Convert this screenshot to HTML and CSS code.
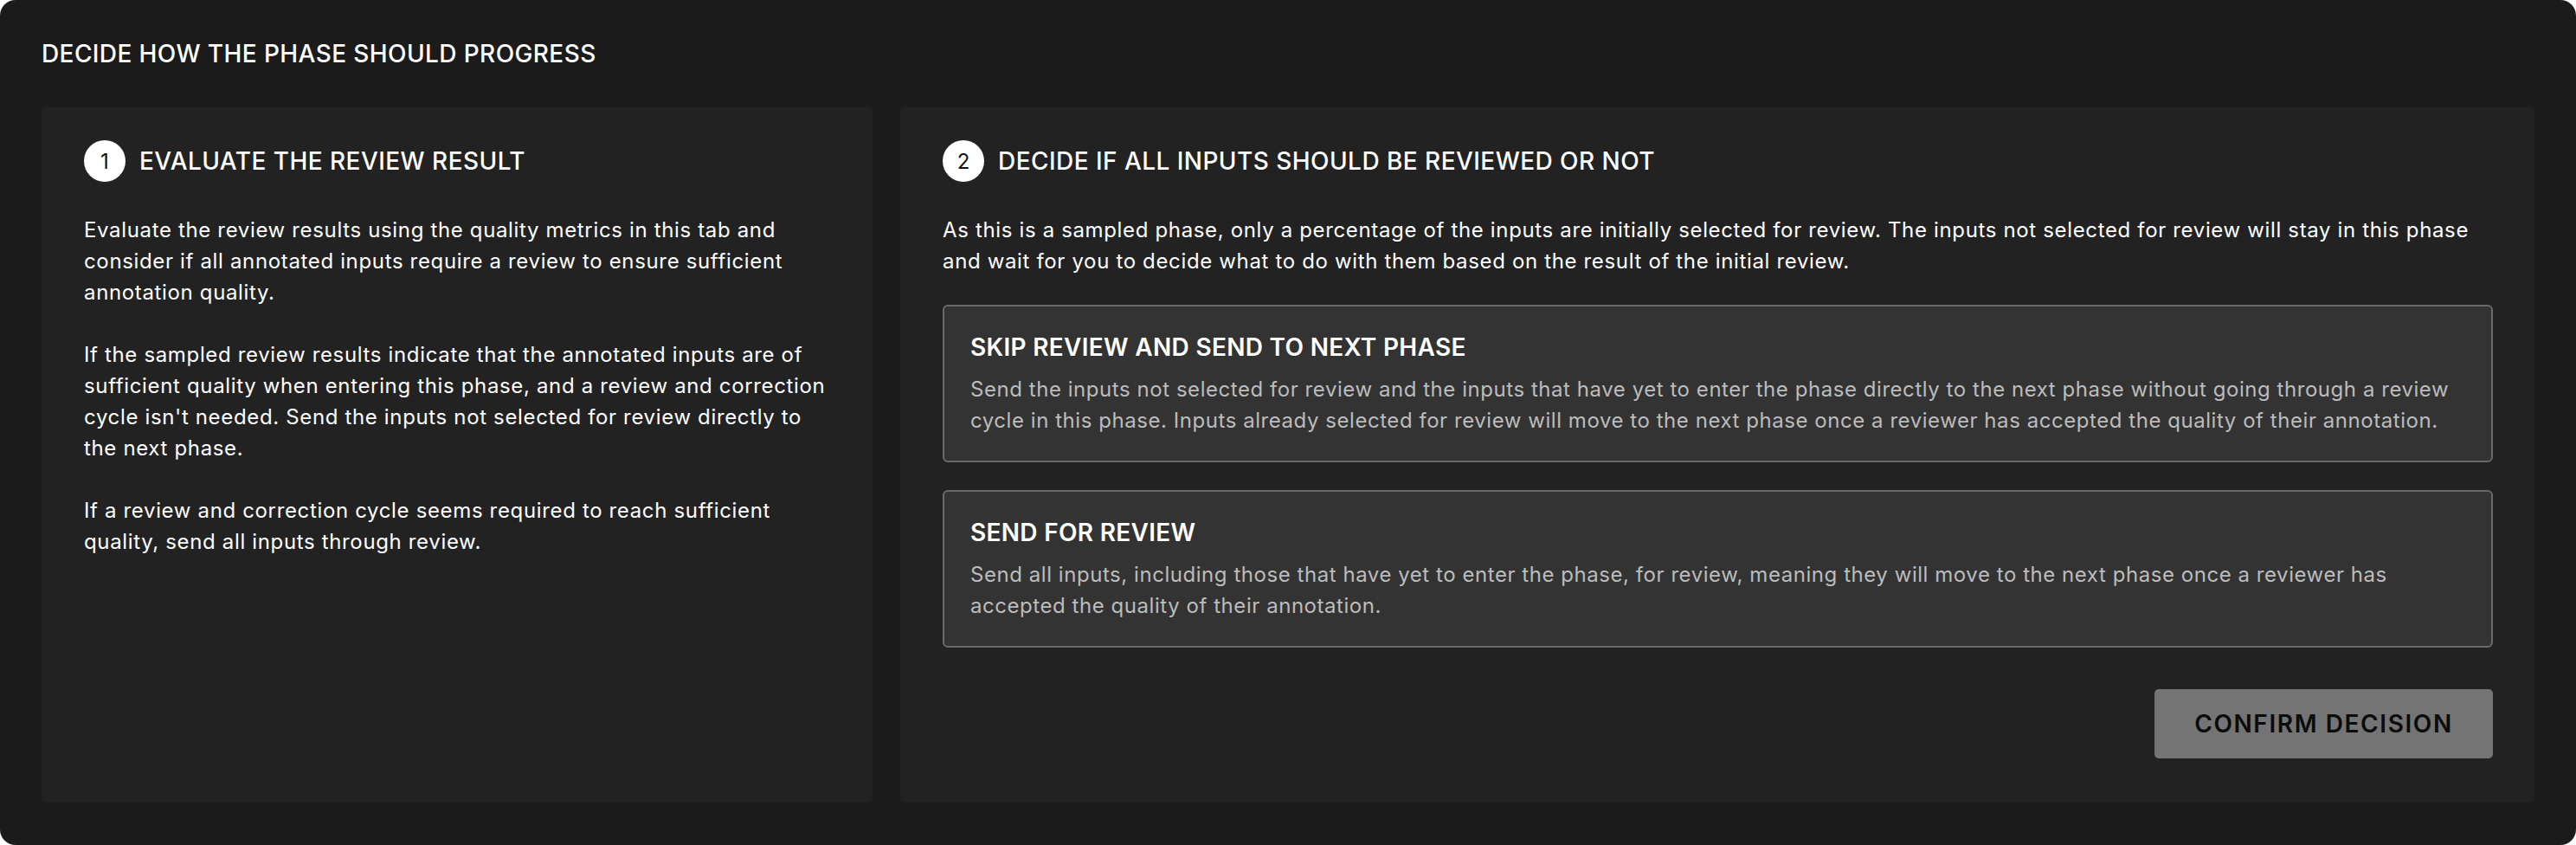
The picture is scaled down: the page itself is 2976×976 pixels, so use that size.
FILE: index.html
```html
<!DOCTYPE html>
<html lang="en">
<head>
<meta charset="utf-8">
<title>Decide how the phase should progress</title>
<link rel="stylesheet" href="styles.css">
</head>
<body>
<div class="frame">
  <h1 class="page-title">DECIDE HOW THE PHASE SHOULD PROGRESS</h1>
  <div class="panels">
    <section class="panel">
      <div class="step-head">
        <span class="step-num">1</span>
        <h2 class="step-title">EVALUATE THE REVIEW RESULT</h2>
      </div>
      <div class="copy">
        <p>Evaluate the review results using the quality metrics in this tab and consider if all annotated inputs require a review to ensure sufficient annotation quality.</p>
        <p>If the sampled review results indicate that the annotated inputs are of sufficient quality when entering this phase, and a review and correction cycle isn't needed. Send the inputs not selected for review directly to the next phase.</p>
        <p>If a review and correction cycle seems required to reach sufficient quality, send all inputs through review.</p>
      </div>
    </section>
    <section class="panel">
      <div class="step-head">
        <span class="step-num">2</span>
        <h2 class="step-title">DECIDE IF ALL INPUTS SHOULD BE REVIEWED OR NOT</h2>
      </div>
      <div class="copy">
        <p>As this is a sampled phase, only a percentage of the inputs are initially selected for review. The inputs not selected for review will stay in this phase and wait for you to decide what to do with them based on the result of the initial review.</p>
      </div>
      <div class="options">
        <div class="option">
          <h3 class="option-title">SKIP REVIEW AND SEND TO NEXT PHASE</h3>
          <p class="option-text">Send the inputs not selected for review and the inputs that have yet to enter the phase directly to the next phase without going through a review cycle in this phase. Inputs already selected for review will move to the next phase once a reviewer has accepted the quality of their annotation.</p>
        </div>
        <div class="option">
          <h3 class="option-title">SEND FOR REVIEW</h3>
          <p class="option-text">Send all inputs, including those that have yet to enter the phase, for review, meaning they will move to the next phase once a reviewer has accepted the quality of their annotation.</p>
        </div>
      </div>
      <div class="actions">
        <button class="confirm" type="button">CONFIRM DECISION</button>
      </div>
    </section>
  </div>
</div>
</body>
</html>
```
FILE: styles.css
```css
* { box-sizing: border-box; }
html, body {
  margin: 0;
  padding: 0;
  background: #ffffff;
}
body {
  font-family: Inter, "Noto Sans", "Liberation Sans", sans-serif;
  color: #ffffff;
}
.frame {
  width: 2976px;
  height: 976px;
  background: #1b1b1b;
  border-radius: 18px;
  padding: 44px 48px 49px 48px;
  display: flex;
  flex-direction: column;
}
.page-title {
  margin: 0 0 44px 0;
  font-size: 28px;
  line-height: 36px;
  font-weight: 500;
  letter-spacing: 0.4px;
}
.panels {
  flex: 1;
  display: grid;
  grid-template-columns: 960px 1fr;
  gap: 32px;
}
.panel {
  background: #222222;
  border-radius: 5px;
  padding: 38px 48px 47px 49px;
  display: flex;
  flex-direction: column;
}
.step-head {
  display: flex;
  align-items: center;
  gap: 16px;
  height: 48px;
  margin-bottom: 38px;
}
.step-num {
  width: 48px;
  height: 48px;
  flex: none;
  border-radius: 50%;
  background: #ffffff;
  color: #111111;
  display: flex;
  align-items: center;
  justify-content: center;
  font-size: 24px;
  font-weight: 400;
}
.step-title {
  margin: 0;
  font-size: 28px;
  line-height: 36px;
  font-weight: 500;
  letter-spacing: 0.45px;
}
.copy p {
  margin: 0 0 36px 0;
  font-size: 24px;
  line-height: 36px;
  letter-spacing: 0.65px;
}
.copy p:last-child { margin-bottom: 0; }
.options {
  margin-top: 32px;
  display: flex;
  flex-direction: column;
  gap: 32px;
}
.option {
  background: #333333;
  border: 2px solid #6a6a6a;
  border-radius: 6px;
  padding: 29px 30px 28px 30px;
}
.option-title {
  margin: 0 0 13px 0;
  font-size: 28px;
  line-height: 36px;
  font-weight: 600;
  letter-spacing: 0.3px;
}
.option-text {
  margin: 0;
  font-size: 24px;
  line-height: 36px;
  color: #bcbcbc;
  letter-spacing: 0.55px;
}
.actions {
  margin-top: 48px;
  display: flex;
  justify-content: flex-end;
}
.confirm {
  width: 391px;
  height: 80px;
  background: #747474;
  border: none;
  border-radius: 5px;
  color: #0b0b0b;
  font-family: Inter, "Noto Sans", "Liberation Sans", sans-serif;
  font-size: 28px;
  font-weight: 600;
  letter-spacing: 1.6px;
  padding: 0;
}
```
